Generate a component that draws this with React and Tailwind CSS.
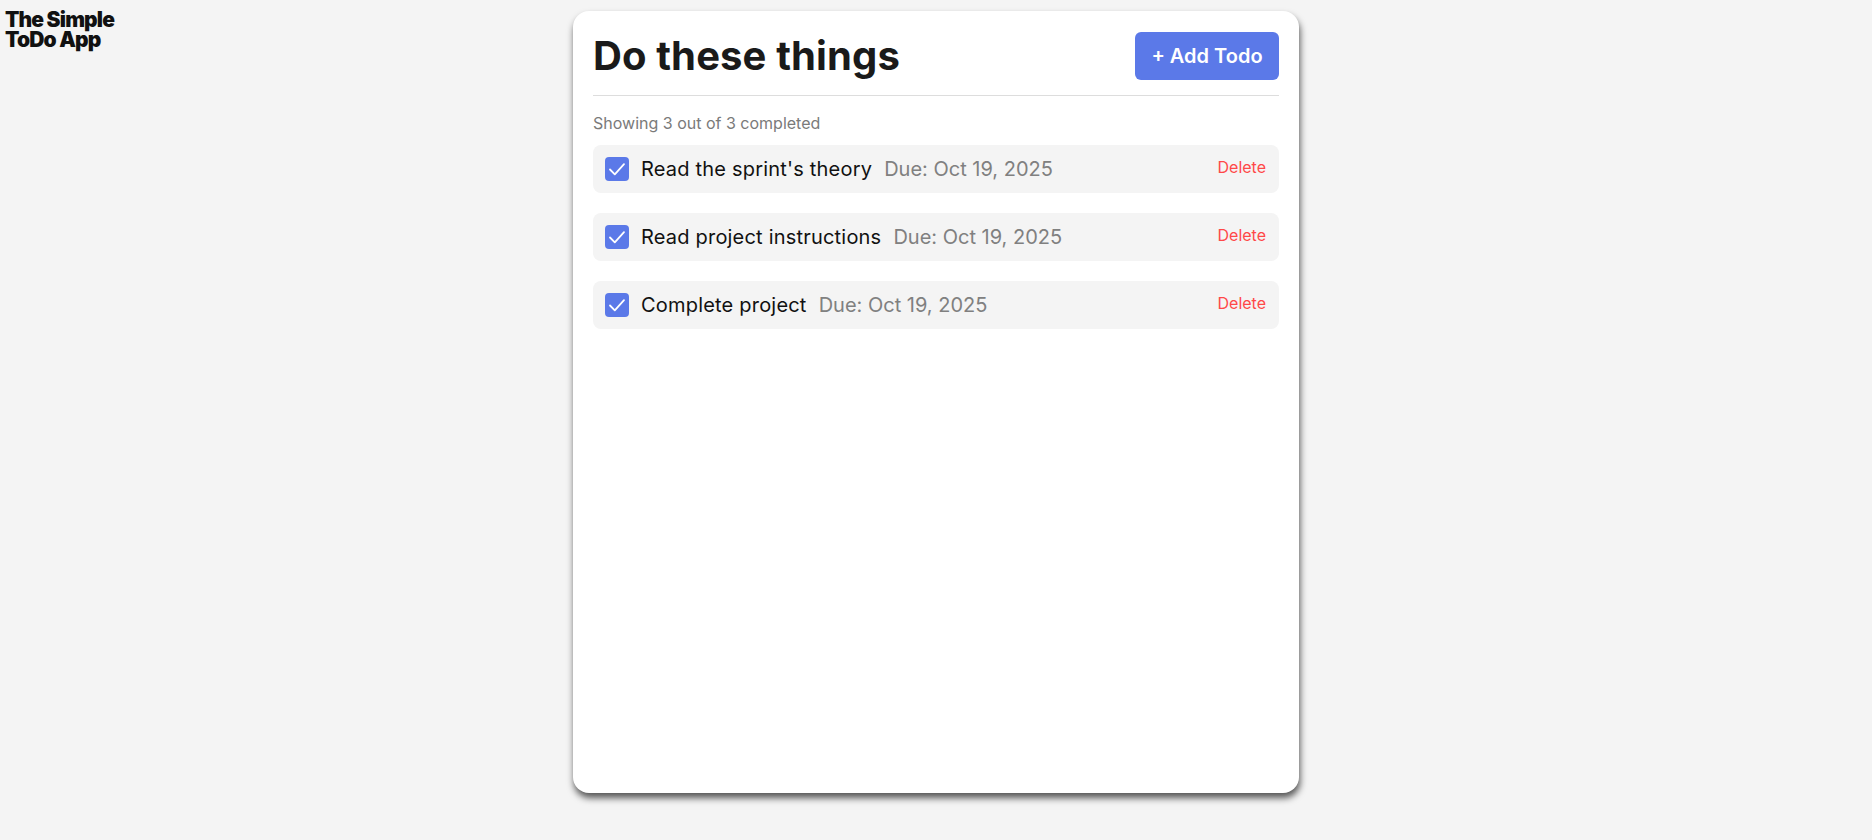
const todos = [
  { id: 1, title: "Read the sprint's theory", due: "Oct 19, 2025" },
  { id: 2, title: "Read project instructions", due: "Oct 19, 2025" },
  { id: 3, title: "Complete project", due: "Oct 19, 2025" },
];

function CheckBox() {
  return (
    <span className="flex h-6 w-6 shrink-0 items-center justify-center rounded-[4px] bg-[#5b79e8]">
      <svg width="24" height="24" viewBox="0 0 24 24" fill="none">
        <path d="M5 12.5 9.8 17.3 19 7.2" stroke="white" strokeWidth="1.8" strokeLinecap="round" strokeLinejoin="round" />
      </svg>
    </span>
  );
}

function TodoRow({ todo }) {
  return (
    <li className="flex h-12 items-center rounded-lg bg-[#f4f4f4] pl-3 pr-[13px]">
      <CheckBox />
      <span className="ml-3 text-xl tracking-[0.01em] text-[#111111]">{todo.title}</span>
      <span className="ml-3 text-xl text-[#808080]">Due: {todo.due}</span>
      <button className="ml-auto mt-[10px] self-start text-base leading-6 text-[#ff4848]">Delete</button>
    </li>
  );
}

export default function App() {
  return (
    <div className="min-h-screen bg-[#f4f4f4] font-['Inter',sans-serif]">
      <div className="grid grid-cols-[1fr_726px_1fr]">
        <h1 className="w-[130px] pl-[5px] pt-[10px] text-[21px] font-black leading-[20px] tracking-[-0.04em] text-[#111111]">
          The Simple ToDo App
        </h1>

        <main className="mt-[11px] flex h-[782px] flex-col rounded-2xl bg-white px-5 pt-[21px] shadow-[1px_5px_7px_rgba(0,0,0,0.65)]">
          <header className="flex items-center justify-between border-b border-[#dddddd] pb-[15px]">
            <h2 className="text-[40px] font-bold leading-[48px] tracking-[0.003em] text-[#1a1a1a]">Do these things</h2>
            <button className="h-12 w-36 rounded-md bg-[#5b79e8] text-xl font-semibold text-white">+ Add Todo</button>
          </header>

          <p className="mt-[17px] text-base leading-5 text-[#7a7a7a]">Showing 3 out of 3 completed</p>

          <ul className="mt-[12px] flex flex-col gap-5">
            {todos.map((t) => (
              <TodoRow key={t.id} todo={t} />
            ))}
          </ul>
        </main>

        <div />
      </div>
    </div>
  );
}
